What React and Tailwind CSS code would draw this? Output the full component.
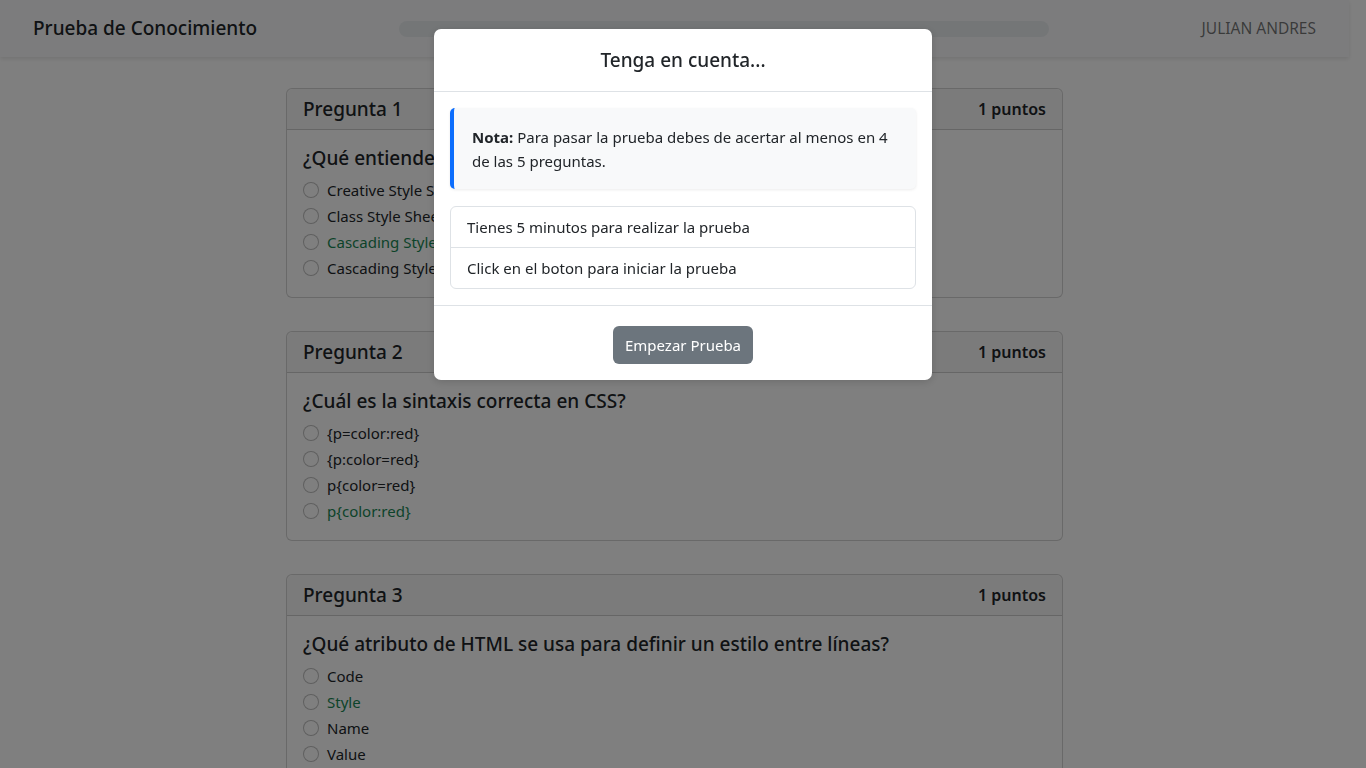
import React from "react";

const questions = [
  {
    n: 1,
    q: "¿Qué entiendes por CSS?",
    opts: ["Creative Style Sheets", "Class Style Sheets", "Cascading Style Sheets", "Cascading Style Sheet"],
    ok: 2,
  },
  {
    n: 2,
    q: "¿Cuál es la sintaxis correcta en CSS?",
    opts: ["{p=color:red}", "{p:color=red}", "p{color=red}", "p{color:red}"],
    ok: 3,
  },
  {
    n: 3,
    q: "¿Qué atributo de HTML se usa para definir un estilo entre líneas?",
    opts: ["Code", "Style", "Name", "Value"],
    ok: 1,
  },
];

function Card({ data }) {
  return (
    <div className="rounded-[6px] border border-[rgba(0,0,0,0.175)] bg-white">
      <div className="flex h-[41px] items-center justify-between border-b border-[rgba(0,0,0,0.175)] bg-[rgba(0,0,0,0.03)] px-4 rounded-t-[6px]">
        <span className="text-[19px] font-medium leading-[24px] text-[#212529]">Pregunta {data.n}</span>
        <span className="text-[16px] font-semibold text-[#212529]">1 puntos</span>
      </div>
      <div className="px-4 pt-[16px] pb-[16px]">
        <div className="mb-[7px] text-[19px] font-medium leading-[24px] text-[#212529]">{data.q}</div>
        {data.opts.map((o, i) => (
          <div key={i} className="flex h-[26px] items-center">
            <span className="h-4 w-4 rounded-full border border-[rgba(0,0,0,0.25)] bg-white" />
            <span className={"ml-2 text-[15px] " + (i === data.ok ? "text-[#198754]" : "text-[#212529]")}>{o}</span>
          </div>
        ))}
      </div>
    </div>
  );
}

export default function App() {
  return (
    <div
      className="relative h-[768px] w-full overflow-hidden bg-white text-[#212529]"
      style={{ fontFamily: '"Noto Sans", "Open Sans", sans-serif' }}
    >
      <div className="pr-[17px]">
        <nav className="flex h-[57px] items-center bg-[#f8f9fa] pl-[33px] pr-[33px] shadow-[0_2px_4px_rgba(0,0,0,0.1)]">
          <span className="text-[19px] font-medium text-[#212529]">Prueba de Conocimiento</span>
          <div className="ml-[142px] h-4 w-[650px] rounded-full bg-[#e9ecef]" />
          <span className="ml-auto text-[15.5px] text-[rgba(0,0,0,0.55)]">JULIAN ANDRES</span>
        </nav>
        <div className="mx-auto mt-[31px] flex w-[777px] flex-col gap-[33px]">
          {questions.map((q) => (
            <Card key={q.n} data={q} />
          ))}
        </div>
      </div>

      <div className="fixed inset-0 bg-black/50" />

      <div className="fixed inset-0 flex justify-center pt-[29px]">
        <div className="h-fit w-[498px] rounded-[7px] bg-white shadow-[0_2px_8px_rgba(0,0,0,0.15)]">
          <div className="flex h-[63px] items-center justify-center border-b border-[#dee2e6]">
            <span className="text-[19px] font-medium text-[#212529]">Tenga en cuenta...</span>
          </div>
          <div className="p-4">
            <div className="rounded-[5px] border-l-4 border-[#0d6efd] bg-[#f8f9fa] pt-[17px] pb-[16px] pl-[18px] pr-4 text-[15px] leading-[24px] text-[#212529] shadow-[0_1px_3px_rgba(0,0,0,0.08)]">
              <b className="font-bold">Nota:</b> Para pasar la prueba debes de acertar al menos en 4
              <br />
              de las 5 preguntas.
            </div>
            <div className="mt-[17px] rounded-[6px] border border-[#dee2e6] text-[15px] text-[#212529]">
              <div className="flex h-[41px] items-center border-b border-[#dee2e6] px-4">Tienes 5 minutos para realizar la prueba</div>
              <div className="flex h-[40px] items-center px-4">Click en el boton para iniciar la prueba</div>
            </div>
          </div>
          <div className="flex justify-center border-t border-[#dee2e6] pt-[20px] pb-[16px]">
            <button className="h-[38px] w-[140px] rounded-[6px] bg-[#6c757d] text-[15px] text-white">Empezar Prueba</button>
          </div>
        </div>
      </div>
    </div>
  );
}
